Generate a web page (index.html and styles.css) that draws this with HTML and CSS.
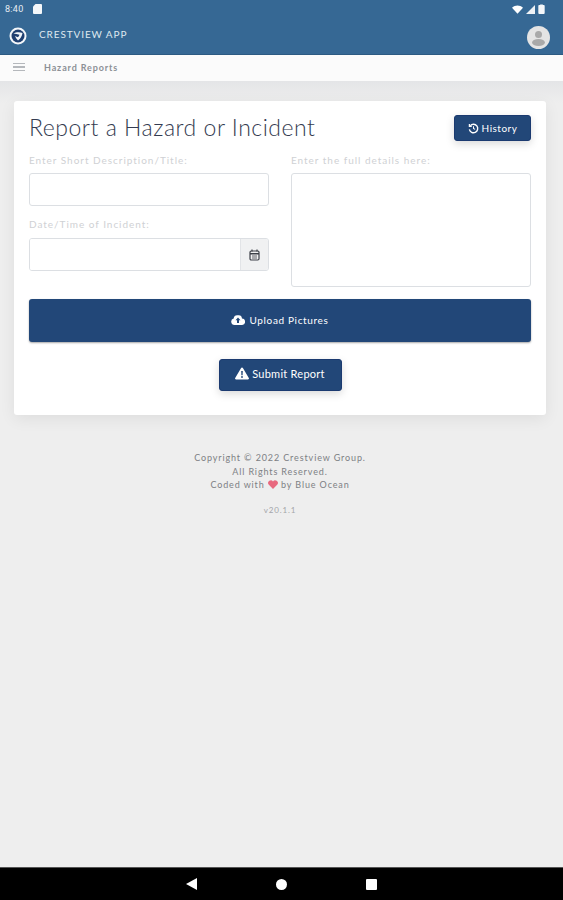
FILE: index.html
```html
<!DOCTYPE html>
<html lang="en">
<head>
  <meta charset="UTF-8" />
  <title>Hazard Reports</title>
  <link rel="stylesheet" href="styles.css">
</head>
<body>
  <div class="page">
    <header class="appbar">
      <div class="statusbar">
        <div class="status-left">
          <span class="clock">8:40</span>
          <svg class="sd-icon" width="9" height="10" viewBox="0 0 9 10"><path d="M2.500 0H8a1 1 0 0 1 1 1v8a1 1 0 0 1-1 1H1a1 1 0 0 1-1-1V2.500z" fill="#f4f7fa"/></svg>
        </div>
        <div class="status-right">
          <svg width="11" height="9" viewBox="0 0 12 9"><path d="M0 2.500C3.500-.8 8.500-.8 12 2.500L6 9z" fill="#fff"/></svg>
          <svg width="9" height="9" viewBox="0 0 10 10"><path d="M10 0v10H0z" fill="#eef2f6"/></svg>
          <svg width="7" height="10" viewBox="0 0 7 11"><path d="M2 1V.5h3V1h1a1 1 0 0 1 1 1v8a1 1 0 0 1-1 1H1a1 1 0 0 1-1-1V2a1 1 0 0 1 1-1z" fill="#f4f7fa"/></svg>
        </div>
      </div>
      <div class="toolbar">
        <div class="brand">
          <svg class="logo" width="18" height="18" viewBox="0 0 18 18">
            <circle cx="9" cy="9" r="8.500" fill="#f4f7fa"/>
            <circle cx="9" cy="9" r="6.500" fill="#1f3f70"/>
            <path d="M4.500 6.500C7 5 11 5 13.500 6 13 9 11.500 11.500 9 13.500 7.500 12 6.500 10.500 6 9c1.200.6 2.200 1 3 1.200.7-.7 1.200-1.500 1.500-2.400C8.500 7.200 6.500 7 4.500 6.500z" fill="#f4f7fa"/>
          </svg>
          <span class="brand-name">CRESTVIEW APP</span>
        </div>
        <svg class="avatar" width="23" height="23" viewBox="0 0 23 23">
          <circle cx="11.500" cy="11.500" r="11.500" fill="#e4e4e4"/>
          <circle cx="11.500" cy="8.500" r="3.500" fill="#a9a9a9"/>
          <ellipse cx="11.500" cy="16.500" rx="6.500" ry="3.500" fill="#a9a9a9"/>
        </svg>
      </div>
    </header>

    <nav class="crumbbar">
      <div class="burger"><span></span><span></span><span></span></div>
      <span class="crumb">Hazard Reports</span>
    </nav>

    <main class="content">
      <section class="card">
        <div class="card-head">
          <h1>Report a Hazard or Incident</h1>
          <button class="btn btn-history" type="button">
            <svg width="11" height="11" viewBox="0 0 12 12" fill="none" stroke="#fff" stroke-width="1.500"><path d="M2.500 3A4.600 4.600 0 1 1 1.500 7"/><path d="M1.500 1v2.600h2.600" stroke-width="1.300"/><path d="M6 3.500V6l1.700 1" stroke-width="1.100"/></svg>
            History
          </button>
        </div>
        <div class="form-grid">
          <div class="form-col">
            <label for="title">Enter Short Description/Title:</label>
            <input id="title" class="field" type="text">
            <label for="when" class="label-second">Date/Time of Incident:</label>
            <div class="date-group">
              <input id="when" class="date-input" type="text">
              <span class="date-addon">
                <svg width="11" height="12" viewBox="0 0 11 12" fill="none" stroke="#3c4048" stroke-width="1.200"><rect x="1" y="2" width="9" height="9" rx="1.200"/><path d="M1 4.800h9" stroke-width="1.600"/><path d="M3 .5v2M8 .5v2"/><path d="M3 7h5M3 9h5" stroke-width=".8"/></svg>
              </span>
            </div>
          </div>
          <div class="form-col">
            <label for="details">Enter the full details here:</label>
            <textarea id="details" class="details"></textarea>
          </div>
        </div>
        <button class="btn btn-upload" type="button">
          <svg width="14" height="11" viewBox="0 0 14 11"><path d="M3.500 11A3.300 3.300 0 0 1 2.700 4.500 3.300 3.300 0 0 1 7 1.300 3.600 3.600 0 0 1 11 4.600 3.200 3.200 0 0 1 10.800 11z" fill="#fff"/><path d="M7 3.500l2.500 2.700H8V9H6V6.200H4.500z" fill="#224778"/></svg>
          Upload Pictures
        </button>
        <div class="submit-row">
          <button class="btn btn-submit" type="button">
            <svg width="14" height="13" viewBox="0 0 14 13"><path d="M7 .5a1 1 0 0 1 .9.500l5.900 10a1 1 0 0 1-.9 1.500H1.100a1 1 0 0 1-.9-1.500L6.100 1A1 1 0 0 1 7 .5z" fill="#fff"/><path d="M6.200 4h1.600l-.2 4.300H6.400z" fill="#224778"/><circle cx="7" cy="10" r=".9" fill="#224778"/></svg>
            Submit Report
          </button>
        </div>
      </section>

      <footer class="foot">
        <p>Copyright © 2022 Crestview Group.</p>
        <p>All Rights Reserved.</p>
        <p>Coded with <svg class="heart" width="10" height="9" viewBox="0 0 10 9"><path d="M5 9L.6 4.500A2.600 2.600 0 0 1 5 1.500a2.600 2.600 0 0 1 4.400 3z" fill="#e8697f"/></svg> by Blue Ocean</p>
        <p class="version">v20.1.1</p>
      </footer>
    </main>

    <div class="navbar">
      <svg width="11" height="12" viewBox="0 0 11 12"><path d="M11 0v12L0 6z" fill="#fff"/></svg>
      <svg width="11" height="11" viewBox="0 0 11 11"><circle cx="5.500" cy="5.500" r="5.500" fill="#fff"/></svg>
      <svg width="11" height="11" viewBox="0 0 11 11"><rect width="11" height="11" rx="1" fill="#fff"/></svg>
    </div>
  </div>
</body>
</html>
```

FILE: styles.css
```css
body {
  margin: 0;
  padding: 0;
  background-color: #eeeeee;
  font-family: 'Lato', 'Open Sans', sans-serif;
  color: #3a4050;
}

.page {
  height: 900px;
  display: flex;
  flex-direction: column;
  overflow: hidden;
}

.appbar {
  height: 54px;
  background-color: #366894;
  border-bottom: 1px solid #2c5a82;
  color: #fff;
  flex: none;
}

.statusbar {
  height: 18px;
  padding: 0 18px 0 5px;
  display: flex;
  align-items: center;
  justify-content: space-between;
}

.status-left,
.status-right {
  display: flex;
  align-items: center;
}

.status-left {
  gap: 9px;
}

.status-right {
  gap: 3px;
}

.clock {
  font-family: 'Roboto', sans-serif;
  font-size: 9px;
  letter-spacing: 0.3px;
  color: #e6edf3;
}

.toolbar {
  height: 36px;
  padding: 0 13px 0 9px;
  display: flex;
  align-items: center;
  justify-content: space-between;
}

.brand {
  display: flex;
  align-items: center;
  gap: 12px;
}

.brand-name {
  font-size: 10px;
  letter-spacing: 0.9px;
  color: #dfe8f0;
  padding-bottom: 4px;
}

.avatar {
  margin-top: 2px;
}

.crumbbar {
  height: 26px;
  background-color: #fbfbfb;
  display: flex;
  align-items: center;
  padding-left: 13px;
  gap: 19px;
  flex: none;
}

.burger {
  width: 12px;
  display: flex;
  flex-direction: column;
  gap: 2px;
  margin-top: -2px;
}

.burger span {
  display: block;
  height: 1.500px;
  background-color: #b5b8bc;
}

.crumb {
  font-size: 9px;
  font-weight: 700;
  letter-spacing: 0.87px;
  color: #8c9096;
  margin-top: -2px;
}

.content {
  flex: 1;
  padding: 20px 17px 0 14px;
  background: linear-gradient(#e4e5e7, #eeeeee 22px);
}

.card {
  background-color: #fff;
  border-radius: 3px;
  padding: 14px 15px 25px;
  height: 275px;
  box-shadow: 0 4px 16px rgba(0, 0, 0, 0.07);
}

.card-head {
  display: flex;
  align-items: center;
  justify-content: space-between;
  height: 26px;
  margin-bottom: 13px;
}

h1 {
  margin: 0 0 2px;
  font-size: 23px;
  font-weight: 300;
  letter-spacing: 0.52px;
  color: #343b50;
}

.btn {
  background-color: #224778;
  color: #fff;
  border: none;
  border-radius: 3px;
  font-family: inherit;
  display: flex;
  align-items: center;
  justify-content: center;
}

.btn-history {
  width: 77px;
  height: 26px;
  gap: 3px;
  font-size: 10px;
  letter-spacing: 0.5px;
  border: 1px solid #1b3a70;
  box-shadow: 0 3px 8px rgba(0, 0, 0, 0.15);
}

.form-grid {
  display: grid;
  grid-template-columns: 240px 240px;
  gap: 22px;
  height: 134px;
}

.form-col {
  display: flex;
  flex-direction: column;
}

label {
  display: block;
  font-size: 10px;
  line-height: 13px;
  letter-spacing: 0.97px;
  color: #cfd1d4;
  margin-bottom: 6px;
}

.label-second {
  margin-top: 12px;
  margin-bottom: 7px;
}

.field,
.date-group,
.details {
  box-sizing: border-box;
  width: 100%;
  border: 1px solid #dcdfe3;
  border-radius: 3px;
  background-color: #fff;
  margin: 0;
  padding: 0;
}

.field {
  height: 33px;
}

.date-group {
  height: 33px;
  display: flex;
  overflow: hidden;
}

.date-input {
  flex: 1;
  min-width: 0;
  border: none;
  padding: 0;
}

.date-addon {
  width: 27px;
  background-color: #f0f1f2;
  border-left: 1px solid #e2e4e7;
  display: flex;
  align-items: center;
  justify-content: center;
}

.details {
  height: 114px;
  resize: none;
  display: block;
}

.btn-upload {
  width: 100%;
  height: 43px;
  margin-top: 11px;
  padding: 0 0 2px;
  gap: 4px;
  font-size: 10px;
  letter-spacing: 0.65px;
  box-shadow: 0 1px 2px rgba(0, 0, 0, 0.35);
}

.submit-row {
  display: flex;
  justify-content: center;
  margin-top: 17px;
}

.btn-submit {
  width: 123px;
  height: 32px;
  padding: 0 0 3px;
  gap: 3px;
  font-size: 11px;
  letter-spacing: 0.25px;
  border: 1px solid #1b3a70;
  box-shadow: 0 3px 8px rgba(0, 0, 0, 0.15);
}

.foot {
  margin-top: 36px;
  text-align: center;
  font-size: 9px;
  letter-spacing: 0.88px;
  color: #7d8084;
}

.foot p {
  margin: 0;
  line-height: 13.500px;
}

.foot .version {
  margin-top: 12px;
  font-size: 8px;
  color: #a3a5a8;
}

.heart {
  vertical-align: -1px;
}

.navbar {
  height: 33px;
  background-color: #000;
  border-top: 1px solid #555;
  box-sizing: border-box;
  flex: none;
  display: flex;
  align-items: center;
  justify-content: center;
  gap: 79px;
}
```
